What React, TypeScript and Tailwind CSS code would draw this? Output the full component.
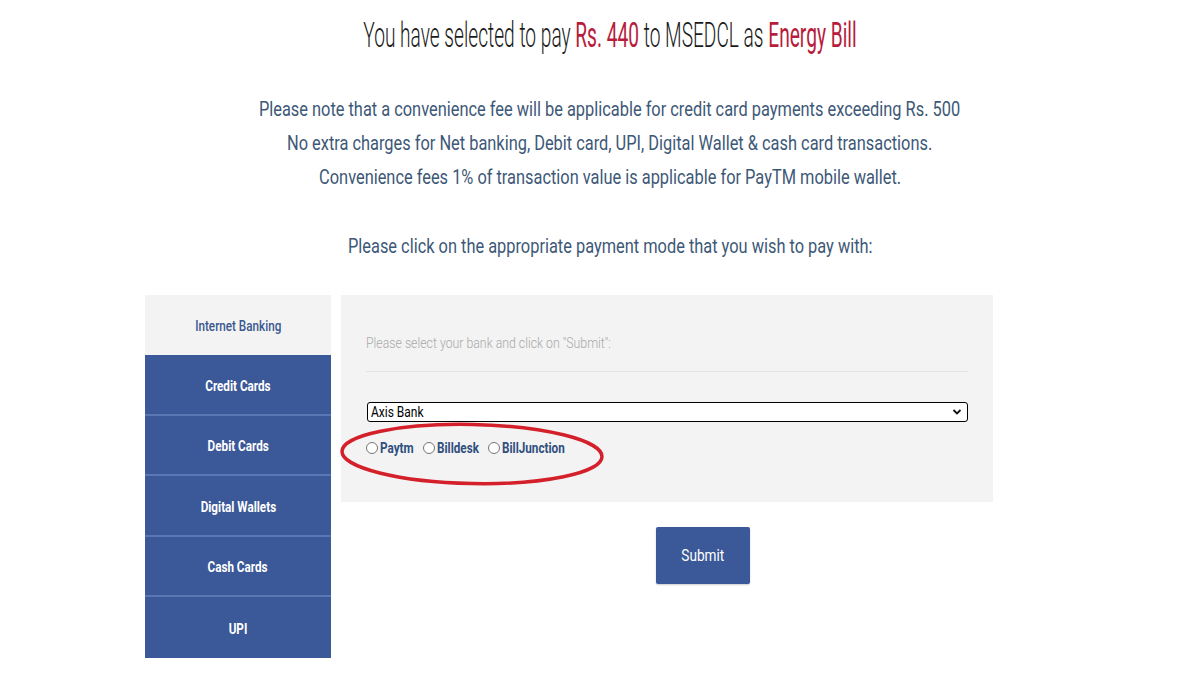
import React from "react";

const Sq = ({ children, k = "scale-x-[0.78]", origin = "origin-center" }: { children: React.ReactNode; k?: string; origin?: string }) => (
  <span className={`inline-block whitespace-nowrap ${k} ${origin}`}>{children}</span>
);

const modes = ["Credit Cards", "Debit Cards", "Digital Wallets", "Cash Cards", "UPI"];
const gateways = [
  { name: "Paytm", w: "w-[33px]" },
  { name: "Billdesk", w: "w-[41px]" },
  { name: "BillJunction", w: "w-[61px]" },
];

export default function App() {
  return (
    <div className="w-[1200px] h-[675px] bg-white overflow-hidden font-['Roboto',sans-serif]">
      <div className="pl-[20px]">
        <h1 className="pt-[14px] text-center text-[35px] leading-[44px] font-light text-[#1a1a1a]">
          <span className="inline-block whitespace-nowrap scale-x-[0.547] origin-center">
            You have selected to pay <span className="font-normal text-[#b81c3c]">Rs. 440</span> to MSEDCL as{" "}
            <span className="font-normal text-[#b81c3c]">Energy Bill</span>
          </span>
        </h1>
        <div className="mt-[34px] text-center text-[21px] leading-[34px] text-[#3d5877]">
          <p><Sq>Please note that a convenience fee will be applicable for credit card payments exceeding Rs. 500</Sq></p>
          <p><Sq>No extra charges for Net banking, Debit card, UPI, Digital Wallet &amp; cash card transactions.</Sq></p>
          <p><Sq>Convenience fees 1% of transaction value is applicable for PayTM mobile wallet.</Sq></p>
        </div>
        <p className="mt-[35px] text-center text-[21px] leading-[34px] text-[#3d5877]">
          <Sq>Please click on the appropriate payment mode that you wish to pay with:</Sq>
        </p>
      </div>

      <div className="mt-[32px] ml-[145px] flex gap-[10px]">
        <div className="w-[186px] flex flex-col">
          <div className="h-[60px] bg-[#f3f3f3] flex items-center justify-center pt-[2px] text-[15px] font-medium text-[#3a5890]">
            <Sq>Internet Banking</Sq>
          </div>
          {modes.map((m) => (
            <div
              key={m}
              className="h-[60.6px] bg-[#3b5898] border-b-2 border-[#5877b3] last:border-b-0 flex items-center justify-center pt-[3px] text-[15px] font-bold text-white"
            >
              <Sq>{m}</Sq>
            </div>
          ))}
        </div>

        <div className="flex flex-col">
          <div className="w-[652px] h-[207px] bg-[#f3f3f3] px-[25px] pt-[38px]">
            <p className="text-[15px] leading-[20px] text-[#a9a9a9] font-light">
              <Sq k="scale-x-[0.82]" origin="origin-left">Please select your bank and click on "Submit":</Sq>
            </p>
            <div className="mt-[18px] h-px bg-[#e3e3e3]" />
            <div className="mt-[30px] ml-px">
              <div className="h-[20px] w-[601px] bg-white border border-black rounded-[3px] flex items-center justify-between pl-[3px] pr-[4px] text-[15px] leading-none text-black">
                <Sq k="scale-x-[0.8]" origin="origin-left">Axis Bank</Sq>
                <svg width="10" height="8" viewBox="0 0 10 8" className="mr-[1px]">
                  <path d="M1.5 2 L5 5.5 L8.5 2" stroke="#111" strokeWidth="1.8" fill="none" />
                </svg>
              </div>
            </div>
            <div className="relative mt-[15px] flex items-center gap-[10px] text-[15px] font-bold text-[#2f4f7e]">
              {gateways.map((g) => (
                <label key={g.name} className="flex items-center gap-[2px]">
                  <span className="w-[12px] h-[12px] rounded-full border border-[#767676] bg-white" />
                  <span className={g.w}>
                    <Sq origin="origin-left">{g.name}</Sq>
                  </span>
                </label>
              ))}
              <svg className="absolute left-[-26px] top-[-16px] pointer-events-none" width="266" height="66" viewBox="0 0 266 66">
                <ellipse cx="132" cy="33" rx="130" ry="29.5" fill="none" stroke="#d4202b" strokeWidth="3.5" transform="rotate(1.2 132 33)" />
              </svg>
            </div>
          </div>
          <div className="mt-[25px] ml-[315px]">
            <button className="w-[94px] h-[57px] bg-[#3b5898] rounded-[2px] text-white text-[17px] shadow-[0_1px_2px_rgba(0,0,0,0.2)]">
              <Sq k="scale-x-[0.8]">Submit</Sq>
            </button>
          </div>
        </div>
      </div>
    </div>
  );
}
